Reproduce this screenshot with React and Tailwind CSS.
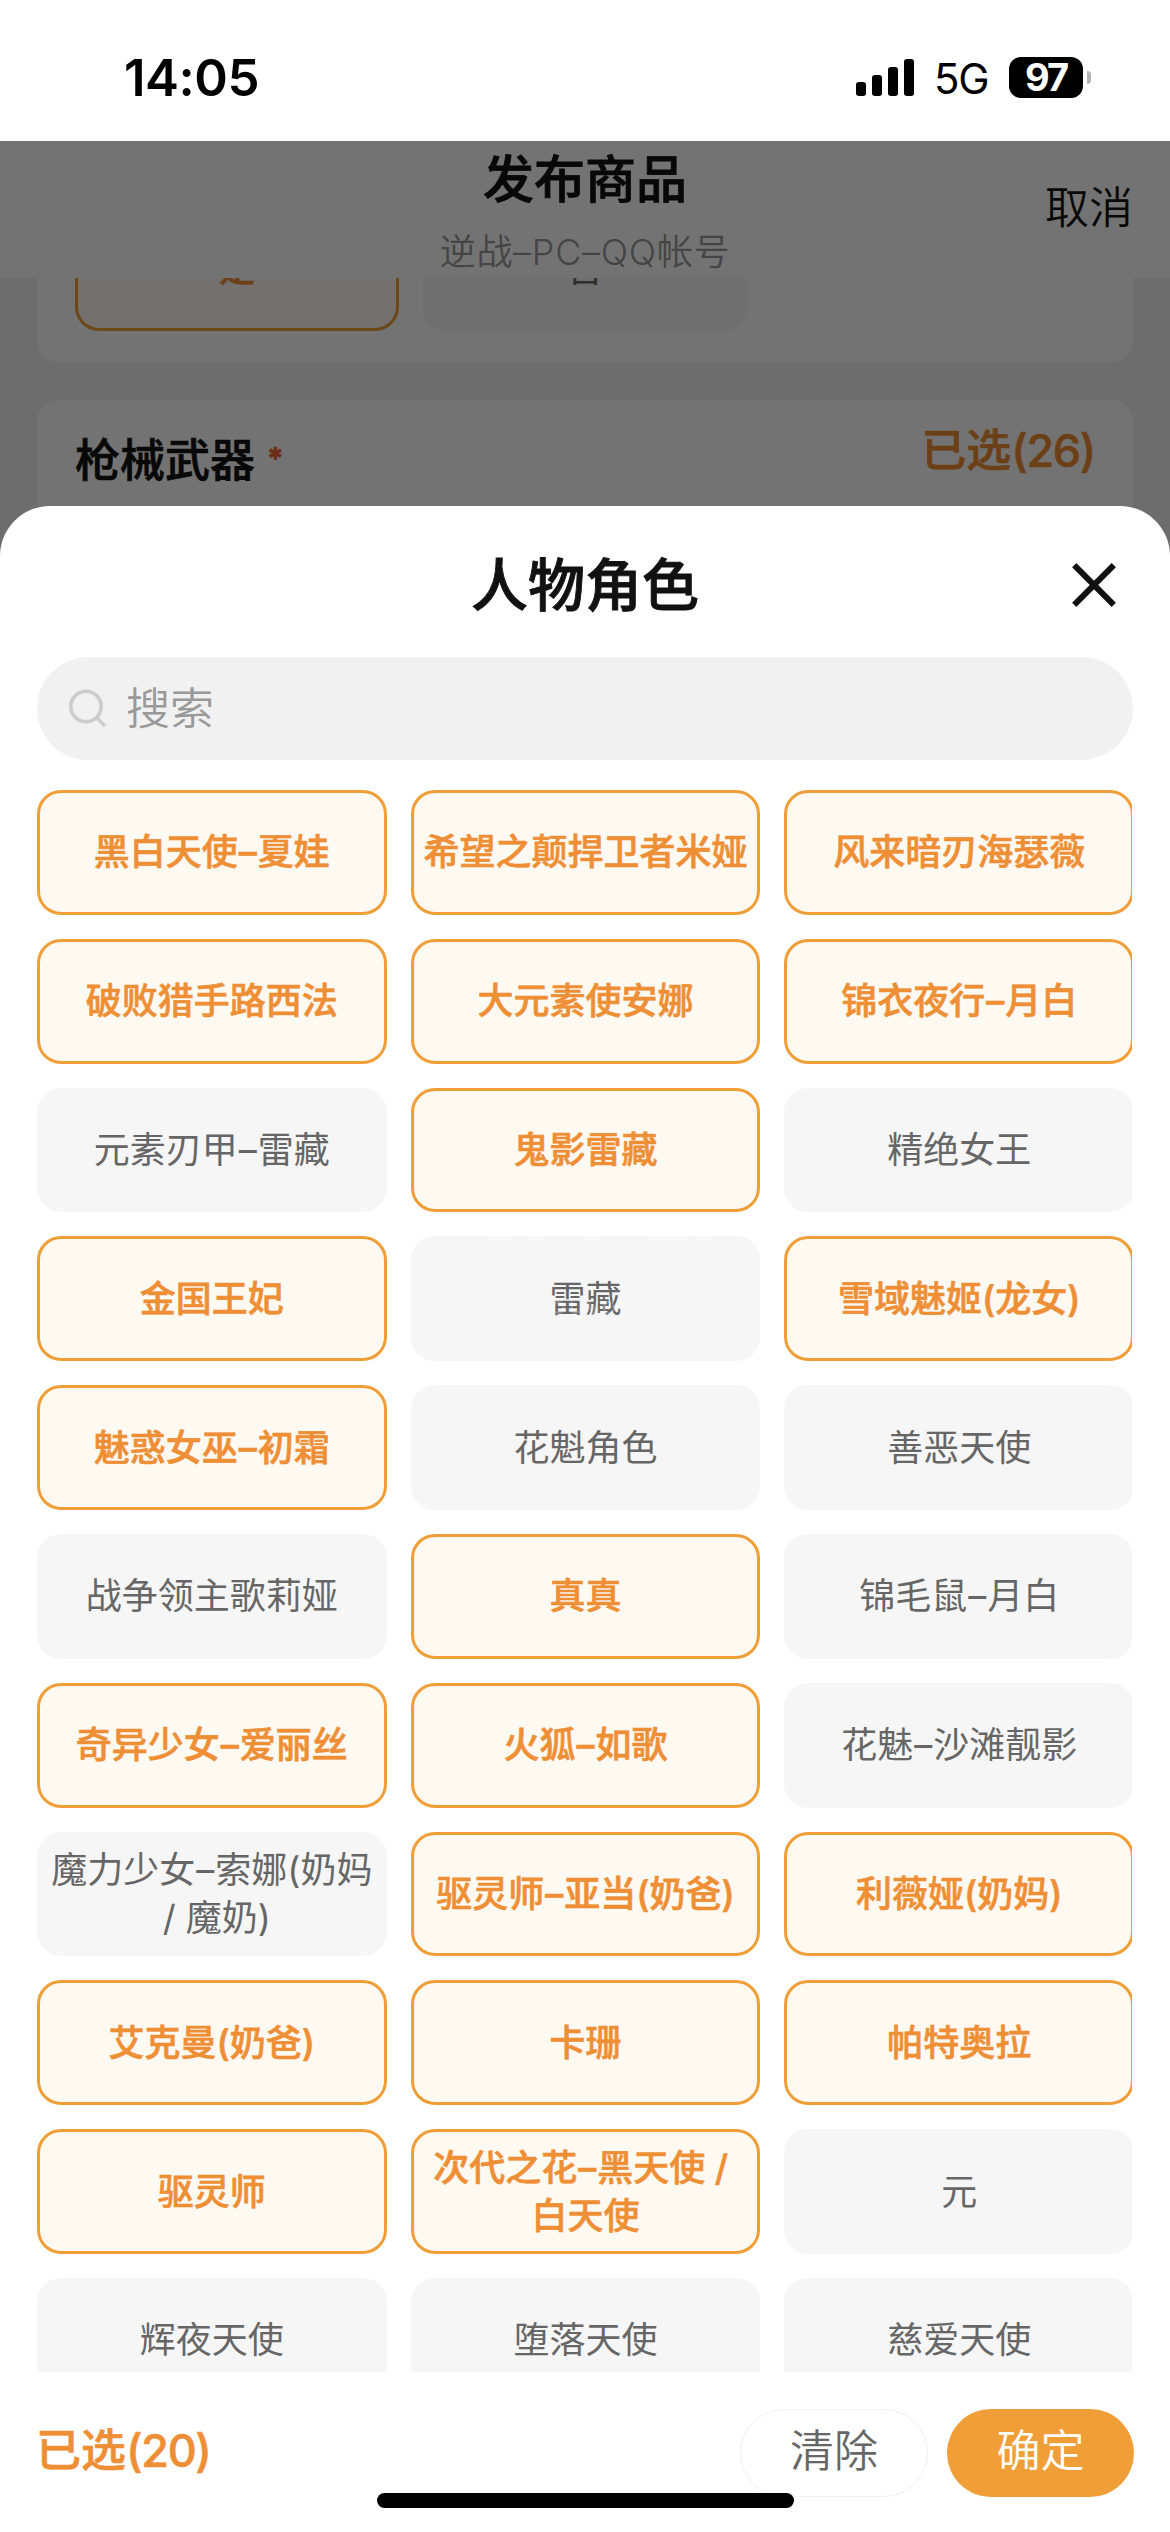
import { Fragment, useState } from "react";

const characters = [
  "黑白天使–夏娃",
  "希望之颠捍卫者米娅",
  "风来暗刃海瑟薇",
  "破败猎手路西法",
  "大元素使安娜",
  "锦衣夜行–月白",
  "元素刃甲–雷藏",
  "鬼影雷藏",
  "精绝女王",
  "金国王妃",
  "雷藏",
  "雪域魅姬(龙女)",
  "魅惑女巫–初霜",
  "花魁角色",
  "善恶天使",
  "战争领主歌莉娅",
  "真真",
  "锦毛鼠–月白",
  "奇异少女–爱丽丝",
  "火狐–如歌",
  "花魅–沙滩靓影",
  "魔力少女–索娜(奶妈\n / 魔奶)",
  "驱灵师–亚当(奶爸)",
  "利薇娅(奶妈)",
  "艾克曼(奶爸)",
  "卡珊",
  "帕特奥拉",
  "驱灵师",
  "次代之花–黑天使 / \n白天使",
  "元",
  "辉夜天使",
  "堕落天使",
  "慈爱天使",
];

const initialSelected = [
  0, 1, 2, 3, 4, 5, 7, 9, 11, 12, 16, 18, 19, 22, 23, 24, 25, 26, 27, 28,
];

function StatusBar() {
  return (
    <div className="flex h-[141px] items-start justify-between bg-white pl-[124px] pr-[79px] pt-[57px] text-black">
      <span className="text-[51px] font-semibold leading-[42px] tracking-[-0.01em]">14:05</span>
      <div className="flex h-[41px] items-center">
        <svg width="58" height="37" viewBox="0 0 58 37" fill="currentColor">
          <rect x="0" y="23" width="10" height="14" rx="3" />
          <rect x="16" y="16" width="10" height="21" rx="3" />
          <rect x="32" y="8" width="10" height="29" rx="3" />
          <rect x="48" y="0" width="10" height="37" rx="3" />
        </svg>
        <span className="ml-[20px] w-[55px] pt-[2px] text-[42px] leading-[41px] tracking-[-0.03em]">5G</span>
        <div className="ml-[20px] flex h-[41px] w-[74px] items-center justify-center rounded-[12px] bg-black text-[38px] font-bold leading-[41px] tracking-[-0.05em] text-white">
          97
        </div>
        <div className="ml-[4px] h-[13px] w-[4px] rounded-r-full bg-[#b3b3b3]" />
      </div>
    </div>
  );
}

function PublishPage() {
  return (
    <div className="flex h-[365px] flex-col overflow-hidden bg-[#6d6d6d]">
      <header className="flex h-[137px] shrink-0 bg-[#737373] px-[37px]">
        <div className="w-[200px]" />
        <div className="flex flex-1 flex-col items-center">
          <h1 className="mt-[11px] text-[51px] font-medium leading-[56px] text-[#080808] [-webkit-text-stroke:0.8px]">发布商品</h1>
          <p className="mt-[18px] text-[36px] font-[350] leading-[52px] tracking-[0.02em] text-[#454545]">逆战–PC–QQ帐号</p>
        </div>
        <button className="h-[134px] w-[200px] text-right text-[44px] font-[350] text-[#080808]">取消</button>
      </header>

      <section className="mx-[37px] flex h-[84px] shrink-0 items-start gap-6 overflow-hidden rounded-b-[21px] bg-[#737373] px-[38px]">
        <div className="-mt-[72px] flex h-[125px] w-[324px] shrink-0 items-center justify-center rounded-3xl border-[3px] border-[#6c4819] bg-[#73706d] text-[36px] font-medium text-[#6c4017] [-webkit-text-stroke:0.6px]">
          是
        </div>
        <div className="-mt-[72px] flex h-[125px] w-[324px] shrink-0 items-center justify-center rounded-3xl bg-[#6f6f6f] text-[36px] text-[#2e2e2e]">
          否
        </div>
      </section>

      <section className="mx-[37px] mt-[38px] flex h-[200px] shrink-0 items-start justify-between rounded-t-[21px] bg-[#737373] px-[38px]">
        <h2 className="mt-[31px] flex text-[45px] font-medium leading-[60px] text-[#080808] [-webkit-text-stroke:0.7px]">
          枪械武器
          <span className="-mt-[3px] ml-[12px] text-[30px] font-bold text-[#6e2c13]">*</span>
        </h2>
        <span className="mt-[21px] text-[45px] font-medium leading-[60px] text-[#6c4017] [-webkit-text-stroke:0.6px]">
          已选<span className="tracking-[-0.03em]">(26)</span>
        </span>
      </section>
    </div>
  );
}

function CharacterChip({ label, active, onClick }) {
  return (
    <button
      onClick={onClick}
      className={
        active
          ? "flex h-full items-center justify-center rounded-3xl border-[3px] border-[#f09f38] bg-[#fef9f1] text-[36px] font-medium leading-[48px] text-[#ef8f35] [-webkit-text-stroke:0.6px]"
          : "flex h-full items-center justify-center rounded-3xl bg-[#f6f6f6] text-[36px] leading-[48px] text-[#666666]"
      }
    >
      <span className="whitespace-pre text-center">
        {label.split("–").map((part, i) => (
          <Fragment key={i}>
            {i > 0 && <span className="px-px">–</span>}
            {part}
          </Fragment>
        ))}
      </span>
    </button>
  );
}

export default function App() {
  const [selected, setSelected] = useState(initialSelected);

  const toggle = (index) => {
    setSelected(
      selected.includes(index)
        ? selected.filter((i) => i !== index)
        : [...selected, index]
    );
  };

  return (
    <div className="h-[2532px] w-[1170px] overflow-hidden bg-[#6d6d6d] font-['Inter','Noto_Sans_CJK_SC',sans-serif]">
      <StatusBar />
      <PublishPage />

      <div className="relative flex h-[2026px] flex-col rounded-t-[50px] bg-white">
        <div className="flex h-[151px] shrink-0 items-center px-[54px] pt-[6px]">
          <div className="w-[44px]" />
          <h2 className="flex-1 pt-[2px] text-center text-[57px] font-medium leading-[76px] text-[#111111] [-webkit-text-stroke:0.9px]">人物角色</h2>
          <button className="text-[#111111]">
            <svg width="44" height="44" viewBox="0 0 44 44" fill="none" stroke="currentColor" strokeWidth="6">
              <path d="M2.2 2.2 41.8 41.8M41.8 2.2 2.2 41.8" />
            </svg>
          </button>
        </div>

        <div className="mx-[37px] flex h-[103px] shrink-0 items-center rounded-full bg-[#f1f1f1] pl-[32px]">
          <svg width="38" height="39" viewBox="0 0 38 39" fill="none" stroke="#cccccc" strokeWidth="3.6">
            <circle cx="17" cy="17.5" r="15.2" />
            <path d="M27.5 28.5 36 37" />
          </svg>
          <span className="ml-[19px] text-[44px] font-[350] text-[#999999]">搜索</span>
        </div>

        <div className="mx-[37px] mt-[30px] h-[1582px] w-[1095px] shrink-0 overflow-hidden">
          <div className="grid w-[1097px] auto-rows-[124.8px] grid-cols-3 gap-6">
            {characters.map((name, index) => (
              <CharacterChip
                key={name}
                label={name}
                active={selected.includes(index)}
                onClick={() => toggle(index)}
              />
            ))}
          </div>
        </div>

        <footer className="flex flex-1 items-start px-[36px] pt-[37px]">
          <span className="flex-1 text-[45px] font-medium leading-[83px] text-[#ef8f35] [-webkit-text-stroke:0.6px]">
            已选<span className="tracking-[-0.03em]">({selected.length})</span>
          </span>
          <button
            onClick={() => setSelected([])}
            className="h-[88px] w-[188px] rounded-full border border-[#f0f0f0] pb-[4px] text-[44px] font-[350] text-[#666666]"
          >
            清除
          </button>
          <button className="ml-[19px] h-[88px] w-[187px] rounded-full bg-[#f09f38] pb-[4px] text-[44px] font-[350] text-white">
            确定
          </button>
        </footer>

        {/* watermark */}
        <div className="pointer-events-none absolute left-[455px] top-[730px] h-[125px] w-[268px] overflow-hidden text-center text-white opacity-20">
          <p className="-mt-[46px] text-[88px] font-bold leading-[100px]">淘手游</p>
          <p className="text-[24px] leading-[32px] tracking-[0.12em]">taoshouyou.com</p>
        </div>

        {/* home indicator */}
        <div className="absolute bottom-[24px] left-[377px] h-[15px] w-[417px] rounded-full bg-black" />
      </div>
    </div>
  );
}
